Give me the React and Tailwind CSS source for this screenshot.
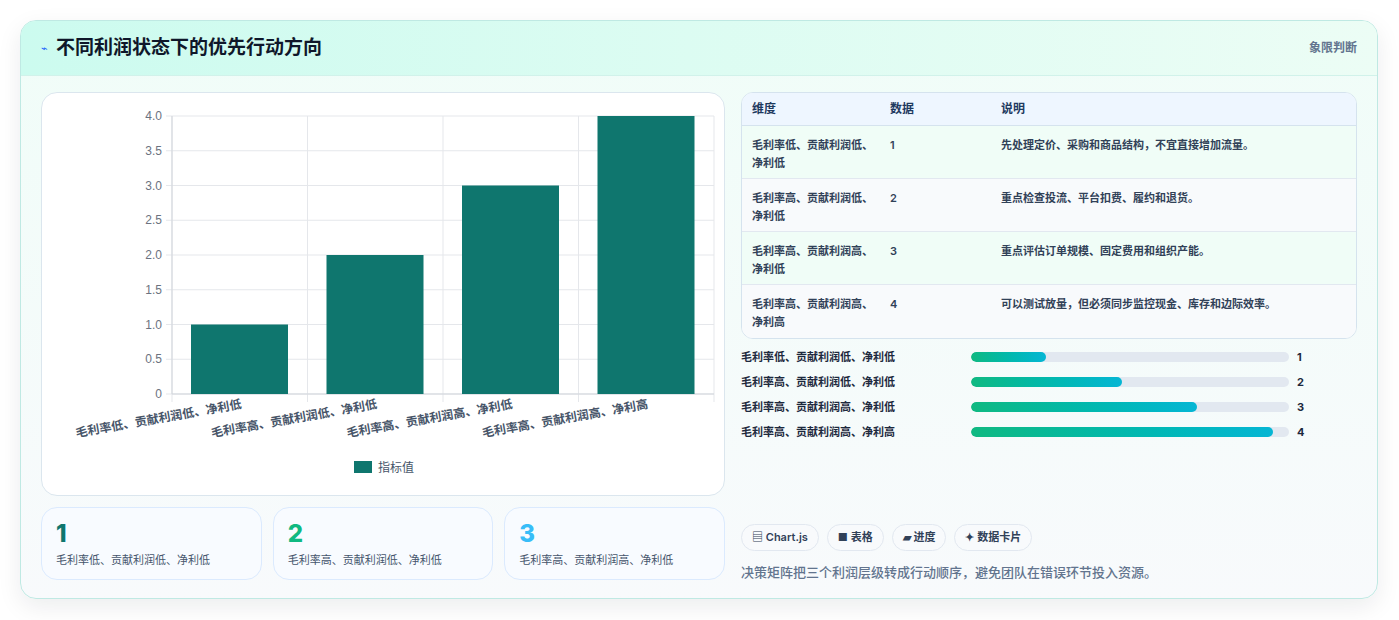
import React from "react";

const rows = [
  ["毛利率低、贡献利润低、净利低", "1", "先处理定价、采购和商品结构，不宜直接增加流量。"],
  ["毛利率高、贡献利润低、净利低", "2", "重点检查投流、平台扣费、履约和退货。"],
  ["毛利率高、贡献利润高、净利低", "3", "重点评估订单规模、固定费用和组织产能。"],
  ["毛利率高、贡献利润高、净利高", "4", "可以测试放量，但必须同步监控现金、库存和边际效率。"],
];

function Chart() {
  const x0 = 130, x1 = 672, y0 = 23, y1 = 301;
  const ticks = [0, 0.5, 1, 1.5, 2, 2.5, 3, 3.5, 4];
  const cw = (x1 - x0) / 4;
  return (
    <svg width="684" height="404" className="block">
      {ticks.map((t) => {
        const y = y1 - (t / 4) * (y1 - y0);
        return (
          <g key={t}>
            <line x1={x0 - 6} x2={x1} y1={y} y2={y} stroke="#e5e7eb" />
            <text x={x0 - 10} y={y + 4} textAnchor="end" fontSize="12" fill="#6b7280" fontFamily="Liberation Sans, sans-serif">{t === 0 ? "0" : t.toFixed(1)}</text>
          </g>
        );
      })}
      {[0, 1, 2, 3, 4].map((i) => (
        <line key={i} x1={x0 + i * cw} x2={x0 + i * cw} y1={y0} y2={y1 + 8} stroke="#e5e7eb" />
      ))}
      <line x1={x0} x2={x0} y1={y0} y2={y1} stroke="#d1d5db" />
      <line x1={x0} x2={x1} y1={y1} y2={y1} stroke="#d1d5db" />
      {[1, 2, 3, 4].map((v, i) => {
        const h = (v / 4) * (y1 - y0);
        return <rect key={i} x={x0 + i * cw + 19} y={y1 - h} width={97} height={h} fill="#0f766e" />;
      })}
      {rows.map((r, i) => (
        <text key={i} x={x0 + i * cw + 70} y={y1 + 14} textAnchor="end" fontSize="12" fontWeight="600" fill="#475569"
          transform={`rotate(-10 ${x0 + i * cw + 70} ${y1 + 14})`} fontFamily="Noto Sans CJK SC, sans-serif">{r[0]}</text>
      ))}
      <rect x="312" y="368" width="18" height="12" fill="#0f766e" />
      <text x="336" y="379" fontSize="12" fill="#475569" fontFamily="Noto Sans CJK SC, sans-serif">指标值</text>
    </svg>
  );
}

export default function App() {
  const font = { fontFamily: "Inter, 'Noto Sans CJK SC', sans-serif" };
  return (
    <div className="w-[1399px] h-[620px] bg-white pt-5 px-5" style={font}>
      <div className="w-[1358px] h-[579px] rounded-2xl border border-[#bfe9e3] bg-gradient-to-b from-[#f0fdf8] to-[#f8fafc] shadow-[0_8px_24px_rgba(15,23,42,0.08)] overflow-hidden">
        <div className="h-[55px] flex items-center justify-between px-5 bg-gradient-to-r from-[#ccfbef] to-[#ecfdf5] border-b border-[#d1f2ea]">
          <div className="flex items-center gap-2">
            <span className="text-[11px] text-blue-600">⌁</span>
            <h1 className="text-[19px] font-bold text-[#0f172a]">不同利润状态下的优先行动方向</h1>
          </div>
          <span className="text-xs font-semibold text-slate-500">象限判断</span>
        </div>
        <div className="flex gap-4 px-5 pt-4">
          <div className="w-[684px] flex flex-col gap-[11px]">
            <div className="h-[404px] bg-white rounded-2xl border border-[#dbe6ee]"><Chart /></div>
            <div className="grid grid-cols-3 gap-[11px]">
              {[["1", "text-[#0f766e]", rows[0][0]], ["2", "text-[#10b981]", rows[1][0]], ["3", "text-[#38bdf8]", rows[2][0]]].map(([n, c, t]) => (
                <div key={n} className="h-[73px] rounded-2xl border border-[#dbeafe] bg-[#f8fbff] px-3.5 pt-3">
                  <div className={`text-[24px] leading-7 font-extrabold ${c}`}>{n}</div>
                  <div className="text-[11px] text-slate-600 mt-1">{t}</div>
                </div>
              ))}
            </div>
          </div>
          <div className="w-[620px] flex flex-col">
            <div className="rounded-xl border border-[#d5e3ee] overflow-hidden bg-white">
              <div className="h-[33px] flex items-center bg-[#eef6ff] border-b border-[#d5e3ee] text-xs font-bold text-[#1e3a5f]">
                <div className="w-[148px] pl-2.5">维度</div><div className="w-[111px]">数据</div><div>说明</div>
              </div>
              {rows.map((r, i) => (
                <div key={i} className={`h-[53px] flex items-start pt-2.5 text-[11px] font-semibold text-slate-700 ${i < 3 ? "border-b border-[#e2e8f0]" : ""} ${i % 2 ? "bg-[#f8fafc]" : "bg-[#f0fdf7]"}`}>
                  <div className="w-[148px] pl-2.5 pr-4 leading-[18px]">{r[0]}</div>
                  <div className="w-[111px] leading-[18px]">{r[1]}</div>
                  <div className="leading-[18px]">{r[2]}</div>
                </div>
              ))}
            </div>
            <div className="mt-[10px] flex flex-col gap-[9px]">
              {rows.map((r, i) => (
                <div key={i} className="flex items-center h-4 text-[11px] font-semibold text-slate-800">
                  <div className="w-[230px]">{r[0]}</div>
                  <div className="w-[318px] h-2.5 rounded-full bg-[#e2e8f0] overflow-hidden">
                    <div className="h-full rounded-full bg-gradient-to-r from-[#10b981] to-[#06b6d4]" style={{ width: `${[23.5, 47.5, 71, 95][i]}%` }} />
                  </div>
                  <div className="ml-2 font-bold">{r[1]}</div>
                </div>
              ))}
            </div>
            <div className="mt-[84px] flex gap-2">
              {["▤ Chart.js", "■ 表格", "▰ 进度", "✦ 数据卡片"].map((b) => (
                <span key={b} className="h-[27px] px-2.5 flex items-center rounded-full border border-[#e2e8f0] bg-[#f8fafc] text-[11px] font-semibold text-slate-700">{b}</span>
              ))}
            </div>
            <div className="mt-3 text-[13px] font-medium text-slate-500">决策矩阵把三个利润层级转成行动顺序，避免团队在错误环节投入资源。</div>
          </div>
        </div>
      </div>
    </div>
  );
}
